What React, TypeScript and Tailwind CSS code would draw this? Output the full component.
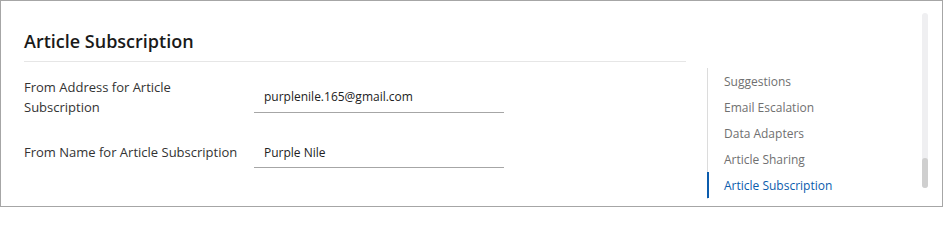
// Article Subscription settings panel with section nav
const NAV_ITEMS = ['Suggestions', 'Email Escalation', 'Data Adapters', 'Article Sharing', 'Article Subscription']
const ACTIVE = 'Article Subscription'

const FIELDS = [
  { label: 'From Address for Article Subscription', value: 'purplenile.165@gmail.com' },
  { label: 'From Name for Article Subscription', value: 'Purple Nile' },
]

export default function App() {
  return (
    <div
      className="w-[943px] h-[207px] border border-[#a6a6a6] bg-white flex overflow-hidden relative"
      style={{ fontFamily: '"Open Sans", "Noto Sans", sans-serif' }}
    >
      {/* 본문 */}
      <div className="w-[662px] ml-[23px] pt-[26px] shrink-0">
        <h1 className="text-[18px] font-semibold leading-[28px] text-[#1a1a1a] pb-[6px] border-b border-[#e6e6e6]">
          Article Subscription
        </h1>
        <div className="flex flex-col">
          <div className="flex items-start mt-[15px]">
            <label className="w-[218px] mr-[12px] text-[13px] leading-[20px] text-[#333]">{FIELDS[0].label}</label>
            <div className="w-[250px] border-b border-[#a6a6a6] px-[10px] pt-[10px] pb-[5px] text-[12px] leading-[20px] text-[#222]">
              {FIELDS[0].value}
            </div>
          </div>
          <div className="flex items-start mt-[20px]">
            <label className="w-[218px] mr-[12px] text-[13px] leading-[20px] text-[#333] pt-[5px]">{FIELDS[1].label}</label>
            <div className="w-[250px] border-b border-[#a6a6a6] px-[10px] pt-[6px] pb-[4px] text-[12px] leading-[20px] text-[#222]">
              {FIELDS[1].value}
            </div>
          </div>
        </div>
      </div>

      {/* 섹션 네비 */}
      <nav className="ml-[21px] mt-[67px] border-l border-[#dcdcdc] h-[131px] flex flex-col">
        {NAV_ITEMS.map((item) => (
          <div
            key={item}
            className={`h-[26px] flex items-center pt-[2px] pl-[15px] text-[12px] -ml-px border-l-2 ${
              item === ACTIVE ? 'border-[#0b5cad] text-[#0b5cad]' : 'border-transparent text-[#707070]'
            }`}
          >
            {item}
          </div>
        ))}
      </nav>

      {/* 스크롤바 */}
      <div className="absolute left-[921px] top-[12px] w-[6px] h-[175px] rounded-full bg-[#efeff1]">
        <div className="absolute left-0 bottom-0 w-[6px] h-[30px] rounded-full bg-[#cfcfcf]" />
      </div>
    </div>
  )
}
